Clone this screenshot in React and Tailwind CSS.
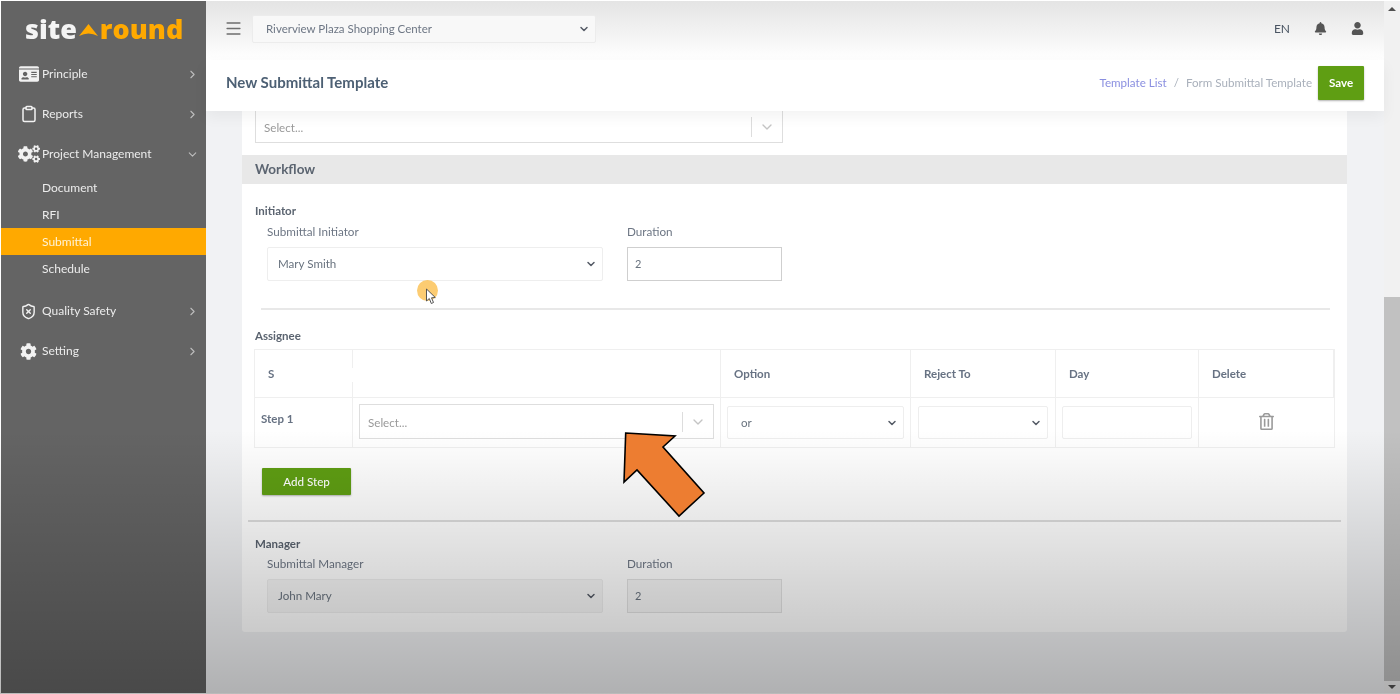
import React from 'react';
import { ChevronRight, ChevronDown, Clipboard, ShieldX, Menu } from 'lucide-react';
import { FaIdCard, FaCogs, FaCog, FaBell, FaUser, FaRegTrashAlt } from 'react-icons/fa';

function NavItem({ icon, label, open }) {
  return (
    <div className="h-10 flex items-center pl-[16px] pr-[7px] text-[12px] text-[#ececec]">
      <span className="w-[25px] flex justify-center items-center -ml-[1px] mr-[1px] text-[#f2f2f2]">{icon}</span>
      <span className="flex-1">{label}</span>
      {open ? <ChevronDown size={13} className="text-[#bdbdbd]" /> : <ChevronRight size={13} className="text-[#bdbdbd]" />}
    </div>
  );
}

function SubItem({ label, active }) {
  return (
    <div className={`h-[27px] flex items-center pl-[41px] text-[12px] ${active ? 'bg-[#ffa900] text-[#fff3d6]' : 'text-[#ececec]'}`}>
      {label}
    </div>
  );
}

function Sidebar() {
  return (
    <aside className="w-[205px] shrink-0 bg-[#646464]">
      <div className="h-[53px] pt-[10px] pl-[24px] flex items-start text-[27px] leading-[36px] font-extrabold font-['Open_Sans',sans-serif]">
        <span className="text-[#f4f4f4]">site</span>
        <svg width="23" height="16" viewBox="0 0 23 16" className="mt-[12px]">
          <path d="M11.5 1 L21 13 Q11.5 8 2 13 Z" fill="#ffa900" />
        </svg>
        <span className="text-[#ffa900]">round</span>
      </div>
      <NavItem icon={<FaIdCard size={20} />} label="Principle" />
      <NavItem icon={<Clipboard size={18} />} label="Reports" />
      <NavItem icon={<FaCogs size={22} />} label="Project Management" open />
      <div className="pb-[9px]">
        <SubItem label="Document" />
        <SubItem label="RFI" />
        <SubItem label="Submittal" active />
        <SubItem label="Schedule" />
      </div>
      <NavItem icon={<ShieldX size={17} />} label="Quality Safety" />
      <NavItem icon={<FaCog size={17} />} label="Setting" />
    </aside>
  );
}

function FakeSelect({ value, height = 'h-[34px]', pad = 'pl-[10px]', muted }) {
  return (
    <div className={`${height} ${pad} border border-[#eeeeee] rounded-[2px] flex items-center justify-between pr-[5px] text-[11.6px] text-[#69737f] ${muted ? 'bg-[#f6f6f6]' : 'bg-white'}`}>
      <span>{value}</span>
      <ChevronDown size={12} strokeWidth={3} className="text-[#555b66]" />
    </div>
  );
}

function ReactSelect({ className }) {
  return (
    <div className={`border border-[#dedede] flex items-center pl-[8px] bg-white text-[11.6px] text-[#999999] ${className}`}>
      <span className="flex-1 pt-[2px]">Select...</span>
      <span className="w-px h-[20px] bg-[#dddddd]" />
      <ChevronDown size={16} className="mx-[7px] text-[#c4c4c4]" />
    </div>
  );
}

function Field({ label, children, className }) {
  return (
    <div className={className}>
      <div className="h-[15px] leading-[15px] mb-[8px] text-[11.7px] text-[#6d7684]">{label}</div>
      {children}
    </div>
  );
}

function DurationInput({ muted, strong }) {
  return (
    <div className={`h-[34px] border ${strong ? 'border-[#cfcfcf]' : 'border-[#e2e2e2]'} pl-[7px] flex items-center text-[11px] text-[#69737f] ${muted ? 'bg-[#f6f6f6]' : 'bg-white'}`}>
      2
    </div>
  );
}

function HeadCell({ children, className }) {
  return (
    <div className={`flex items-center pl-[13px] text-[11.5px] font-bold text-[#677283] border-r border-[#efefef] last:border-r-0 ${className || ''}`}>
      {children}
    </div>
  );
}

function AssigneeTable() {
  return (
    <div className="mx-[12px] border border-[#efefef] grid grid-cols-[98px_368px_190px_145px_143px_1fr] grid-rows-[47px_50px]">
      <HeadCell className="relative">
        S
        {/* gap in the column divider */}
        <span className="absolute -right-px top-[18px] w-px h-[14px] bg-white" />
      </HeadCell>
      <HeadCell />
      <HeadCell>Option</HeadCell>
      <HeadCell>Reject To</HeadCell>
      <HeadCell>Day</HeadCell>
      <HeadCell>Delete</HeadCell>

      <div className="border-t border-r border-[#efefef] pl-[6px] pt-[12px] text-[11.5px] font-bold text-[#677283]">Step 1</div>
      <div className="border-t border-r border-[#efefef] px-[6px] pt-[6px]">
        <ReactSelect className="h-[35px]" />
      </div>
      <div className="border-t border-r border-[#efefef] px-[6px] pt-[8px]">
        <FakeSelect value="or" height="h-[33px]" pad="pl-[13px]" />
      </div>
      <div className="border-t border-r border-[#efefef] px-[7px] pt-[8px]">
        <FakeSelect value="" height="h-[33px]" />
      </div>
      <div className="border-t border-r border-[#efefef] px-[6px] pt-[8px]">
        <div className="h-[33px] border border-[#eeeeee] rounded-[2px]" />
      </div>
      <div className="border-t border-[#efefef] flex items-center justify-center pb-[3px]">
        <FaRegTrashAlt size={17} className="text-[#9a9a9a]" />
      </div>
    </div>
  );
}

function Card() {
  return (
    <section className="ml-[36px] mr-[37px] bg-white rounded-b-[3px] pb-[19px]">
      <div className="pl-[13px] h-[45px]">
        <ReactSelect className="w-[528px] h-[33px] -mt-[1px]" />
      </div>
      <div className="h-[29px] bg-[#e8e8e8] flex items-center pl-[13px] text-[13.5px] font-bold text-[#5b6470]">Workflow</div>

      <div className="pt-[19px] pl-[13px] h-[40px] text-[11.5px] font-bold text-[#5b6470] leading-[15px]">Initiator</div>
      <div className="flex pl-[25px]">
        <Field label="Submittal Initiator" className="w-[336px]"><FakeSelect value="Mary Smith" /></Field>
        <Field label="Duration" className="ml-[24px] w-[155px]"><DurationInput strong /></Field>
      </div>
      <hr className="mt-[27px] ml-[19px] mr-[17px] border-t-2 border-[#e8e8e8]" />

      <div className="pt-[18px] pb-[6px] pl-[13px] text-[11.5px] font-bold text-[#5b6470] leading-[15px]">Assignee</div>
      <AssigneeTable />

      <button className="ml-[20px] mt-[20px] w-[89px] h-[27px] bg-[#5f9e13] text-white text-[11.6px] font-medium rounded-[1px] shadow-[0_1px_2px_rgba(0,0,0,0.3)]">Add Step</button>

      <hr className="mt-[25px] ml-[6px] mr-[6px] border-t-2 border-[#dddddd]" />

      <div className="pt-[14px] pl-[13px] h-[34px] text-[11.5px] font-bold text-[#5b6470] leading-[15px]">Manager</div>
      <div className="flex pl-[25px]">
        <Field label="Submittal Manager" className="w-[336px]"><FakeSelect value="John Mary" muted /></Field>
        <Field label="Duration" className="ml-[24px] w-[155px]"><DurationInput muted /></Field>
      </div>
    </section>
  );
}

function Scrollbar() {
  return (
    <div className="w-[16px] shrink-0 bg-[#f1f1f1] flex flex-col items-center">
      <div className="h-[16px] flex items-center justify-center">
        <span className="border-x-[4px] border-x-transparent border-b-[4px] border-b-[#505050]" />
      </div>
      <div className="mt-[280px] w-full h-[384px] bg-[#c1c1c1]" />
      <div className="h-[12px] flex items-center justify-center">
        <span className="border-x-[4px] border-x-transparent border-t-[4px] border-t-[#505050]" />
      </div>
    </div>
  );
}

export default function App() {
  return (
    <div className="relative w-[1400px] h-[694px] overflow-hidden bg-white py-[1px] pl-[1px] font-[Lato,sans-serif] blur-[0.5px]">
      <div className="flex h-[692px]">
        <Sidebar />
        <main className="flex-1 min-w-0 flex bg-[#f1f2f4]">
          <div className="flex-1 min-w-0">
            <div className="h-[59px] bg-gradient-to-b from-[#e4e4e4] to-white flex items-center pl-[18px] pr-[20px] pb-[4px]">
              <Menu size={19} className="text-[#6e6e6e]" />
              <div className="ml-[9px] w-[344px] h-[28px] border border-[#ececec] rounded-[2px] flex items-center justify-between pl-[13px] pr-[5px] text-[11.5px] text-[#6d7684] bg-[#f8f8f8]">
                <span>Riverview Plaza Shopping Center</span>
                <ChevronDown size={12} strokeWidth={3} className="text-[#555b66]" />
              </div>
              <div className="ml-auto flex items-center text-[#555555]">
                <span className="text-[12px] text-[#4a5563] mr-[24px]">EN</span>
                <FaBell size={13} className="mr-[24px]" />
                <FaUser size={13} />
              </div>
            </div>
            <div className="relative z-10 h-[51px] bg-white flex items-center pl-[20px] pr-[20px] pb-[6px] shadow-[0_6px_14px_rgba(0,0,0,0.05)]">
              <h1 className="text-[15px] font-bold text-[#4d6074]">New Submittal Template</h1>
              <div className="ml-auto flex items-center text-[11.6px]">
                <span className="text-[#8a8fe0]">Template List</span>
                <span className="mx-[7px] text-[#a9b0bb]">/</span>
                <span className="text-[#a9b0bb]">Form Submittal Template</span>
                <button className="ml-[6px] w-[46px] h-[34px] bg-[#5f9e13] text-white font-bold rounded-[1px] shadow-[0_1px_2px_rgba(0,0,0,0.3)]">Save</button>
              </div>
            </div>
            <Card />
          </div>
          <Scrollbar />
        </main>
      </div>

      {/* video vignette */}
      <div className="absolute inset-0 pointer-events-none bg-[linear-gradient(to_bottom,rgba(0,0,0,0)_0,rgba(0,0,0,0)_62%,rgba(0,0,0,0.27)_100%)]" />

      {/* cursor highlight */}
      <div className="absolute left-[417px] top-[280px] w-[21px] h-[21px] rounded-full bg-[#fbbf4f]/80" />
      <svg className="absolute left-[425px] top-[288px]" width="12" height="17" viewBox="0 0 12 17">
        <path d="M1.5 1 L1.5 13 L4.3 10.5 L6.3 15.5 L8.5 14.5 L6.5 9.8 L10.3 9.5 Z" fill="#ffffff" stroke="#555555" strokeWidth="1" />
      </svg>

      {/* annotation arrow */}
      <svg className="absolute left-[620px] top-[428px]" width="90" height="93" viewBox="620 428 90 93">
        <path d="M625.7 433 L675 436 L663 447 L704 493 L679 516 L637 470 L624 482 Z" fill="#ed7d31" stroke="#000000" strokeWidth="1.6" strokeLinejoin="miter" />
      </svg>
    </div>
  );
}
